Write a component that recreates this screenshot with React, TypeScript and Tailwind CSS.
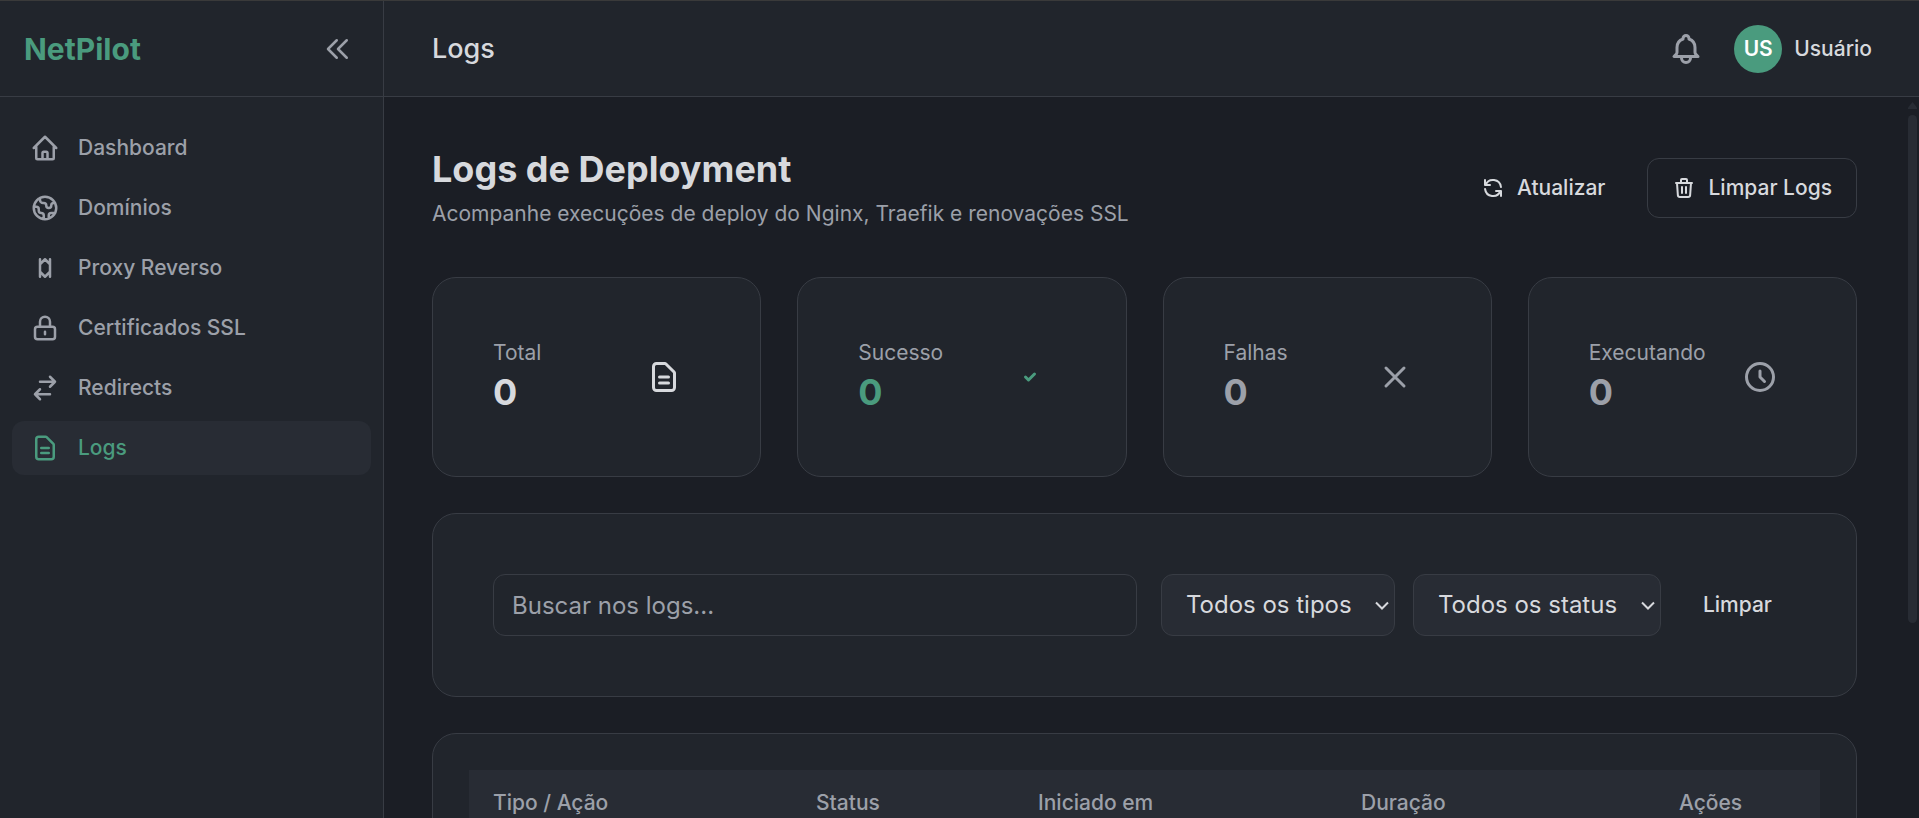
import type { ReactNode } from 'react';

const paths = {
  collapse: 'M11 19l-7-7 7-7m8 14l-7-7 7-7',
  home: 'M3 12l2-2m0 0l7-7 7 7M5 10v10a1 1 0 001 1h3m10-11l2 2m-2-2v10a1 1 0 01-1 1h-3m-6 0a1 1 0 001-1v-4a1 1 0 011-1h2a1 1 0 011 1v4a1 1 0 001 1m-6 0h6',
  globe:
    'M3.055 11H5a2 2 0 012 2v1a2 2 0 002 2 2 2 0 012 2v2.945M8 3.935V5.5A2.5 2.5 0 0010.5 8h.5a2 2 0 012 2 2 2 0 104 0 2 2 0 012-2h1.064M15 20.488V18a2 2 0 012-2h3.064M21 12a9 9 0 11-18 0 9 9 0 0118 0z',
  proxy: 'M8 9l4-4 4 4m0 6l-4 4-4-4M8 5v14M16 5v14',
  lock: 'M12 15v2m-6 4h12a2 2 0 002-2v-6a2 2 0 00-2-2H6a2 2 0 00-2 2v6a2 2 0 002 2zm10-10V7a4 4 0 00-8 0v4h8z',
  swap: 'M8 7h12m0 0l-4-4m4 4l-4 4m0 6H4m0 0l4 4m-4-4l4-4',
  file: 'M9 12h6m-6 4h6m2 5H7a2 2 0 01-2-2V5a2 2 0 012-2h5.586a1 1 0 01.707.293l5.414 5.414a1 1 0 01.293.707V19a2 2 0 01-2 2z',
  check: 'M9 12l2 2 4-4',
  close: 'M6 18L18 6M6 6l12 12',
  clock: 'M12 8v4l3 3m6-3a9 9 0 11-18 0 9 9 0 0118 0z',
  refresh:
    'M4 4v5h.582m15.356 2A8.001 8.001 0 004.582 9m0 0H9m11 11v-5h-.581m0 0a8.003 8.003 0 01-15.357-2m15.357 2H15',
  trash: 'M19 7l-.867 12.142A2 2 0 0116.138 21H7.862a2 2 0 01-1.995-1.858L5 7m5 4v6m4-6v6m1-10V4a1 1 0 00-1-1h-4a1 1 0 00-1 1v3M4 7h16',
  bell: 'M15 17h5l-1.405-1.405A2.032 2.032 0 0118 14.158V11a6.002 6.002 0 00-4-5.659V5a2 2 0 10-4 0v.341C7.67 6.165 6 8.388 6 11v3.159c0 .538-.214 1.055-.595 1.436L4 17h5m6 0v1a3 3 0 11-6 0v-1m6 0H9',
};

type IconName = keyof typeof paths;

function Icon({ name, className }: { name: IconName; className: string }) {
  return (
    <svg
      aria-hidden="true"
      viewBox="0 0 24 24"
      fill="none"
      stroke="currentColor"
      strokeWidth="2"
      strokeLinecap="round"
      strokeLinejoin="round"
      className={`shrink-0 ${className}`}
    >
      <path d={paths[name]} />
    </svg>
  );
}

const navItems: { label: string; icon: IconName; active?: boolean }[] = [
  { label: 'Dashboard', icon: 'home' },
  { label: 'Domínios', icon: 'globe' },
  { label: 'Proxy Reverso', icon: 'proxy' },
  { label: 'Certificados SSL', icon: 'lock' },
  { label: 'Redirects', icon: 'swap' },
  { label: 'Logs', icon: 'file', active: true },
];

const stats: { label: string; value: number; icon: IconName; color: string }[] = [
  { label: 'Total', value: 0, icon: 'file', color: 'text-[#d7d9dd]' },
  { label: 'Sucesso', value: 0, icon: 'check', color: 'text-[#4a9b7e]' },
  { label: 'Falhas', value: 0, icon: 'close', color: 'text-[#9ca0a9]' },
  { label: 'Executando', value: 0, icon: 'clock', color: 'text-[#9ca0a9]' },
];

function Card({ className, children }: { className: string; children: ReactNode }) {
  return <div className={`rounded-3xl border border-[#383c44] bg-[#21252c] ${className}`}>{children}</div>;
}

function FilterSelect({ label, option }: { label: string; option: string }) {
  return (
    <div className="relative">
      <select
        aria-label={label}
        className="h-[62px] appearance-none rounded-xl border border-[#383c44] bg-[#282c34] pr-[42px] pl-6 text-2xl text-[#d7d9dd]"
      >
        <option>{option}</option>
      </select>
      <svg
        aria-hidden="true"
        viewBox="0 0 14 9"
        fill="none"
        stroke="currentColor"
        strokeWidth="2"
        className="pointer-events-none absolute top-[27px] right-[6px] h-[9px] w-[14px]"
      >
        <path d="M1 1.500l6 6 6-6" />
      </svg>
    </div>
  );
}

function Sidebar() {
  return (
    <aside className="flex w-96 shrink-0 flex-col border-r border-[#383c44] bg-[#21252c]">
      <div className="flex h-24 shrink-0 items-center justify-between border-b border-[#383c44] px-6">
        <span className="text-[30px] leading-9 font-bold text-[#4a9b7e]">NetPilot</span>
        <button type="button" aria-label="Recolher menu" className="p-[6px] text-[#9ca0a9]">
          <Icon name="collapse" className="size-[30px]" />
        </button>
      </div>
      <nav className="flex flex-col gap-[6px] px-3 py-6">
        {navItems.map((item) => (
          <a
            key={item.label}
            href={`#${item.label}`}
            className={`flex h-[54px] items-center gap-[18px] rounded-xl px-[18px] text-[21px] font-medium ${
              item.active ? 'bg-[#282c34] text-[#4a9b7e]' : 'text-[#9ca0a9]'
            }`}
          >
            <Icon name={item.icon} className="size-[30px]" />
            {item.label}
          </a>
        ))}
      </nav>
    </aside>
  );
}

function Header() {
  return (
    <header className="flex h-24 shrink-0 items-center justify-between border-b border-[#383c44] bg-[#21252c] pr-[47px] pl-12">
      <span className="text-[27px] leading-9 font-medium">Logs</span>
      <div className="flex items-center gap-6">
        <button type="button" aria-label="Notificações" className="p-[6px] text-[#9ca0a9]">
          <Icon name="bell" className="size-9" />
        </button>
        <button type="button" className="flex items-center gap-3 text-[21px] font-medium">
          <span className="flex size-12 items-center justify-center rounded-full bg-[#4a9b7e] font-semibold text-white">
            US
          </span>
          Usuário
        </button>
      </div>
    </header>
  );
}

export default function App() {
  return (
    <div className="flex h-screen overflow-hidden border-t border-[#3a3a3a] bg-[#1b1e25] font-['Inter','Liberation_Sans',sans-serif] text-[#d7d9dd]">
      <Sidebar />
      <div className="flex min-w-0 flex-1 flex-col">
        <Header />
        <div className="flex min-h-0 flex-1">
          <main className="flex min-w-0 flex-1 flex-col gap-9 overflow-hidden p-12">
            <div className="mb-[11px] flex shrink-0 items-center justify-between">
              <div>
                <h1 className="text-4xl leading-[48px] font-bold">Logs de Deployment</h1>
                <p className="mt-[5px] text-[21px] leading-8 text-[#9ca0a9]">
                  Acompanhe execuções de deploy do Nginx, Traefik e renovações SSL
                </p>
              </div>
              <div className="flex items-center gap-[18px] text-[21px] font-medium">
                <button type="button" className="flex h-[60px] items-center gap-3 px-6">
                  <Icon name="refresh" className="size-6" />
                  Atualizar
                </button>
                <button
                  type="button"
                  className="flex h-[60px] items-center gap-3 rounded-xl border border-[#383c44] px-6"
                >
                  <Icon name="trash" className="size-6" />
                  Limpar Logs
                </button>
              </div>
            </div>

            <div className="grid shrink-0 grid-cols-4 gap-9">
              {stats.map((stat) => (
                <Card key={stat.label} className="flex h-[200px] items-center justify-between pr-[78px] pl-[60px]">
                  <div>
                    <div className="text-[21px] leading-[30px] text-[#9ca0a9]">{stat.label}</div>
                    <div className={`text-4xl leading-[48px] font-bold ${stat.color}`}>{stat.value}</div>
                  </div>
                  <Icon name={stat.icon} className={`size-9 ${stat.color}`} />
                </Card>
              ))}
            </div>

            <Card className="flex shrink-0 items-center gap-[18px] p-[60px]">
              <input
                type="search"
                aria-label="Buscar nos logs"
                placeholder="Buscar nos logs..."
                className="mr-[6px] h-[62px] min-w-0 flex-1 rounded-xl border border-[#383c44] bg-transparent px-[18px] text-2xl placeholder:text-[#9ca0a9]"
              />
              <FilterSelect label="Tipo" option="Todos os tipos" />
              <FilterSelect label="Status" option="Todos os status" />
              <button type="button" className="px-6 text-[21px] font-medium">
                Limpar
              </button>
            </Card>

            <Card className="shrink-0 p-9">
              <table className="w-full table-fixed text-left text-[21px] text-[#9ca0a9]">
                <colgroup>
                  <col className="w-[323px]" />
                  <col className="w-[222px]" />
                  <col className="w-[323px]" />
                  <col className="w-[318px]" />
                  <col />
                </colgroup>
                <thead className="bg-[#282c34]">
                  <tr className="h-[66px]">
                    <th className="px-6 font-medium">Tipo / Ação</th>
                    <th className="px-6 font-medium">Status</th>
                    <th className="px-6 font-medium">Iniciado em</th>
                    <th className="px-6 font-medium">Duração</th>
                    <th className="px-6 font-medium">Ações</th>
                  </tr>
                </thead>
                <tbody />
              </table>
            </Card>
          </main>
          <div aria-hidden="true" className="flex w-[14px] shrink-0 flex-col pl-[3px]">
            <svg viewBox="0 0 9 7" className="mt-[5px] h-[7px] w-[9px] fill-[#282c34]">
              <path d="M4.500 0L9 5.500V7H0V5.500z" />
            </svg>
            <div className="mt-[6px] h-[508px] w-[9px] rounded-full bg-[#282c34]" />
          </div>
        </div>
      </div>
    </div>
  );
}
